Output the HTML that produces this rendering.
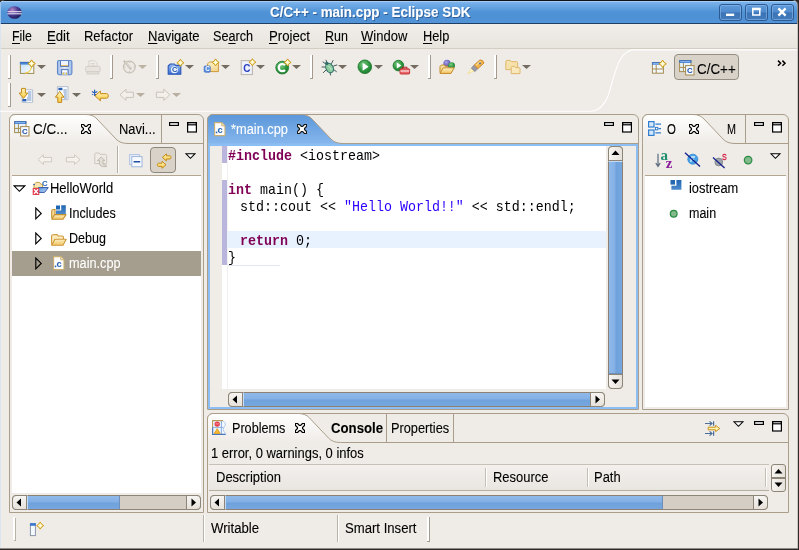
<!DOCTYPE html>
<html><head><meta charset="utf-8">
<style>
*{box-sizing:border-box;margin:0;padding:0}
html,body{width:799px;height:550px;overflow:hidden;background:#EFEBE7;font-family:"Liberation Sans",sans-serif;font-size:14px;color:#000}
#win{position:absolute;left:0;top:0;width:799px;height:550px;background:#EFEBE7;overflow:hidden}
u{text-decoration:none;border-bottom:1px solid currentColor;display:inline-block;line-height:13px;padding-bottom:0px}
</style></head><body>
<div id="win">
<div style="position:absolute;left:0px;top:0px;width:799px;height:550px;background:#2E2B28"></div>
<div style="position:absolute;left:0px;top:0px;width:798px;height:549px;background:#8F8B86;border-radius:5px 5px 0 0"></div>
<div style="position:absolute;left:797px;top:24px;width:1px;height:524px;background:#C9C5BF"></div>
<div style="position:absolute;left:0px;top:0px;width:797px;height:548px;background:#EFEBE7;border-radius:5px 5px 0 0"></div>
<div style="position:absolute;left:0px;top:0px;width:797px;height:24px;border-radius:5px 5px 0 0;background:linear-gradient(#0E141C 0,#0E141C 1px,#A8CCF2 1px,#A8CCF2 2px,#7CB3EB 2px,#4F93D6 12px,#4E91D4 17px,#5294D7 22.8px,#1F3F66 23px,#1F3F66 24px);"></div>
<div style="position:absolute;left:0px;top:24px;width:1px;height:524px;background:#DCE4EE"></div>
<div style="position:absolute;left:0px;top:2px;width:1px;height:22px;background:#9CC2EE"></div>
<div style="position:absolute;left:719px;top:4px;width:23px;height:17px;border:1px solid #2C5A94;border-radius:3px;background:linear-gradient(#5F9ADA 0,#4F8BCE 48%,#3A72B4 52%,#447DBE 100%);box-shadow:inset 0 0 0 1px rgba(150,195,240,.5)"></div>
<div style="position:absolute;left:745px;top:4px;width:23px;height:17px;border:1px solid #2C5A94;border-radius:3px;background:linear-gradient(#5F9ADA 0,#4F8BCE 48%,#3A72B4 52%,#447DBE 100%);box-shadow:inset 0 0 0 1px rgba(150,195,240,.5)"></div>
<div style="position:absolute;left:771px;top:4px;width:23px;height:17px;border:1px solid #2C5A94;border-radius:3px;background:linear-gradient(#5F9ADA 0,#4F8BCE 48%,#3A72B4 52%,#447DBE 100%);box-shadow:inset 0 0 0 1px rgba(150,195,240,.5)"></div>
<div style="position:absolute;left:1px;top:24px;width:796px;height:24px;background:linear-gradient(#F1EEEA,#E8E4DE)"></div>
<div style="position:absolute;left:1px;top:48px;width:796px;height:1px;background:#D3CDC3"></div>
<div style="position:absolute;left:9px;top:114px;width:195px;height:399px;border:1px solid #AA9E8A;border-radius:6px 6px 0 0;background:#EFEBE7;"></div>
<div style="position:absolute;left:12px;top:175px;width:189px;height:1px;background:#B3A792"></div>
<div style="position:absolute;left:12px;top:176px;width:189px;height:317px;background:#fff"></div>
<div style="position:absolute;left:207px;top:114px;width:432px;height:296px;border:1px solid #AA9E8A;border-radius:6px 6px 0 0;background:#EFEBE7;"></div>
<div style="position:absolute;left:208px;top:143px;width:430px;height:266px;background:#8CBEF3"></div>
<div style="position:absolute;left:642px;top:114px;width:147px;height:296px;border:1px solid #AA9E8A;border-radius:6px 6px 0 0;background:#EFEBE7;"></div>
<div style="position:absolute;left:645px;top:175px;width:141px;height:1px;background:#B3A792"></div>
<div style="position:absolute;left:645px;top:176px;width:141px;height:231px;background:#fff"></div>
<div style="position:absolute;left:207px;top:413px;width:582px;height:100px;border:1px solid #AA9E8A;border-radius:6px 6px 0 0;background:#EFEBE7;"></div>
<svg style="position:absolute;left:0;top:0" width="799" height="550" viewBox="0 0 799 550"><defs><linearGradient id="tg1" x1="0" y1="0" x2="0" y2="1"><stop offset="0" stop-color="#FFFFFF"/><stop offset="1" stop-color="#EFEBE7"/></linearGradient></defs><path d="M9.5 143.5 L9.5 120.0 A5.5 5.5 0 0 1 15.0 114.5 L86 114.5 Q93 114.5 97 119.0 L116 139.0 Q120 143.5 128 143.5 Z" fill="url(#tg1)"/><path d="M9.5 143.5 L9.5 120.0 A5.5 5.5 0 0 1 15.0 114.5 L86 114.5 Q93 114.5 97 119.0 L116 139.0 Q120 143.5 128 143.5 L203.5 143.5" fill="none" stroke="#AA9E8A" stroke-width="1"/></svg>
<div style="position:absolute;left:161px;top:115px;width:1px;height:28px;background:#AA9E8A"></div>
<svg style="position:absolute;left:0;top:0" width="799" height="550" viewBox="0 0 799 550"><defs><linearGradient id="tg2" x1="0" y1="0" x2="0" y2="1"><stop offset="0" stop-color="#FFFFFF"/><stop offset="1" stop-color="#EFEBE7"/></linearGradient></defs><path d="M642.5 143.5 L642.5 120.0 A5.5 5.5 0 0 1 648.0 114.5 L693 114.5 Q700 114.5 704 119.0 L723 139.0 Q727 143.5 735 143.5 Z" fill="url(#tg2)"/><path d="M642.5 143.5 L642.5 120.0 A5.5 5.5 0 0 1 648.0 114.5 L693 114.5 Q700 114.5 704 119.0 L723 139.0 Q727 143.5 735 143.5 L788.5 143.5" fill="none" stroke="#AA9E8A" stroke-width="1"/></svg>
<div style="position:absolute;left:745px;top:115px;width:1px;height:28px;background:#AA9E8A"></div>
<svg style="position:absolute;left:0;top:0" width="799" height="550" viewBox="0 0 799 550"><defs><linearGradient id="tg3" x1="0" y1="0" x2="0" y2="1"><stop offset="0" stop-color="#FFFFFF"/><stop offset="1" stop-color="#EFEBE7"/></linearGradient></defs><path d="M207.5 442.5 L207.5 419.0 A5.5 5.5 0 0 1 213.0 413.5 L298.5 413.5 Q305.5 413.5 309.5 418.0 L328.5 438.0 Q332.5 442.5 340.5 442.5 Z" fill="url(#tg3)"/><path d="M207.5 442.5 L207.5 419.0 A5.5 5.5 0 0 1 213.0 413.5 L298.5 413.5 Q305.5 413.5 309.5 418.0 L328.5 438.0 Q332.5 442.5 340.5 442.5 L788.5 442.5" fill="none" stroke="#AA9E8A" stroke-width="1"/></svg>
<div style="position:absolute;left:386px;top:414px;width:1px;height:28px;background:#AA9E8A"></div>
<div style="position:absolute;left:453px;top:414px;width:1px;height:28px;background:#AA9E8A"></div>
<svg style="position:absolute;left:0;top:0" width="799" height="550" viewBox="0 0 799 550"><defs><linearGradient id="tg4" x1="0" y1="0" x2="0" y2="1"><stop offset="0" stop-color="#5B97DA"/><stop offset="1" stop-color="#86B6EC"/></linearGradient></defs><path d="M207.5 143.5 L207.5 120.0 A5.5 5.5 0 0 1 213.0 114.5 L301 114.5 Q308 114.5 312 119.0 L331 139.0 Q335 143.5 343 143.5 Z" fill="url(#tg4)"/><path d="M207.5 143.5 L207.5 120.0 A5.5 5.5 0 0 1 213.0 114.5 L301 114.5 Q308 114.5 312 119.0 L331 139.0 Q335 143.5 343 143.5 L638.5 143.5" fill="none" stroke="#AA9E8A" stroke-width="1"/></svg>
<div style="position:absolute;left:210px;top:146px;width:426px;height:261px;background:#EFEBE7"></div>
<div style="position:absolute;left:210px;top:146px;width:12px;height:243px;background:#F0EDE9"></div>
<div style="position:absolute;left:222px;top:146px;width:384px;height:243px;background:#fff"></div>
<div style="position:absolute;left:227px;top:146px;width:1px;height:243px;background:#F1F1F1"></div>
<div style="position:absolute;left:12px;top:495px;width:189px;height:15px;background:#D5CEC4;border:1px solid #8C8578;border-radius:4px"></div>
<div style="position:absolute;left:26px;top:495px;width:93px;height:15px;background:linear-gradient(#8FB9EA 0,#83B0E5 45%,#6FA1DB 55%,#76A7DF 100%);border-top:1px solid #8C8071;border-bottom:1px solid #8C8071;border-right:1px solid #6E8FB8;border-left:1px solid #C5DCF5;left:27px"></div>
<div style="position:absolute;left:12px;top:495px;width:15px;height:15px;background:linear-gradient(#F7F5F2,#E6E1DA);border:1px solid #8C8578;border-radius:4px 0 0 4px"></div>
<div style="position:absolute;left:186px;top:495px;width:15px;height:15px;background:linear-gradient(#F7F5F2,#E6E1DA);border:1px solid #8C8578;border-radius:0 4px 4px 0"></div>
<div style="position:absolute;left:228px;top:392px;width:377px;height:15px;background:#D5CEC4;border:1px solid #8C8578;border-radius:4px"></div>
<div style="position:absolute;left:242px;top:392px;width:348px;height:15px;background:linear-gradient(#8FB9EA 0,#83B0E5 45%,#6FA1DB 55%,#76A7DF 100%);border-top:1px solid #8C8071;border-bottom:1px solid #8C8071;border-right:1px solid #6E8FB8;border-left:1px solid #C5DCF5;left:243px"></div>
<div style="position:absolute;left:228px;top:392px;width:15px;height:15px;background:linear-gradient(#F7F5F2,#E6E1DA);border:1px solid #8C8578;border-radius:4px 0 0 4px"></div>
<div style="position:absolute;left:590px;top:392px;width:15px;height:15px;background:linear-gradient(#F7F5F2,#E6E1DA);border:1px solid #8C8578;border-radius:0 4px 4px 0"></div>
<div style="position:absolute;left:608px;top:146px;width:15px;height:243px;background:#D5CEC4;border:1px solid #8C8578;border-radius:4px"></div>
<div style="position:absolute;left:608px;top:161px;width:15px;height:213px;background:linear-gradient(90deg,#8FB9EA 0,#83B0E5 45%,#6FA1DB 55%,#76A7DF 100%);border-left:1px solid #8C8071;border-right:1px solid #8C8071;border-bottom:1px solid #6E8FB8;border-top:1px solid #C5DCF5"></div>
<div style="position:absolute;left:608px;top:146px;width:15px;height:15px;background:linear-gradient(90deg,#F7F5F2,#E6E1DA);border:1px solid #8C8578;border-radius:4px 4px 0 0"></div>
<div style="position:absolute;left:608px;top:374px;width:15px;height:15px;background:linear-gradient(90deg,#F7F5F2,#E6E1DA);border:1px solid #8C8578;border-radius:0 0 4px 4px"></div>
<div style="position:absolute;left:210px;top:495px;width:558px;height:15px;background:#D5CEC4;border:1px solid #8C8578;border-radius:4px"></div>
<div style="position:absolute;left:224px;top:495px;width:438px;height:15px;background:linear-gradient(#8FB9EA 0,#83B0E5 45%,#6FA1DB 55%,#76A7DF 100%);border-top:1px solid #8C8071;border-bottom:1px solid #8C8071;border-right:1px solid #6E8FB8;border-left:1px solid #C5DCF5;left:225px"></div>
<div style="position:absolute;left:210px;top:495px;width:15px;height:15px;background:linear-gradient(#F7F5F2,#E6E1DA);border:1px solid #8C8578;border-radius:4px 0 0 4px"></div>
<div style="position:absolute;left:753px;top:495px;width:15px;height:15px;background:linear-gradient(#F7F5F2,#E6E1DA);border:1px solid #8C8578;border-radius:0 4px 4px 0"></div>
<div style="position:absolute;left:12px;top:251px;width:189px;height:25px;background:#A59D8E"></div>
<div style="position:absolute;left:209px;top:464px;width:560px;height:27px;background:linear-gradient(#F3F0ED,#E9E5E0);border-top:1px solid #C8C1B6;border-bottom:1px solid #B5AEA2"></div>
<div style="position:absolute;left:485px;top:468px;width:1px;height:19px;background:#C5BEB3"></div>
<div style="position:absolute;left:486px;top:468px;width:1px;height:19px;background:#fff"></div>
<div style="position:absolute;left:587px;top:468px;width:1px;height:19px;background:#C5BEB3"></div>
<div style="position:absolute;left:588px;top:468px;width:1px;height:19px;background:#fff"></div>
<div style="position:absolute;left:765px;top:468px;width:1px;height:19px;background:#C5BEB3"></div>
<div style="position:absolute;left:766px;top:468px;width:1px;height:19px;background:#fff"></div>
<div style="position:absolute;left:203px;top:515px;width:1px;height:27px;background:#B9B2A6"></div>
<div style="position:absolute;left:204px;top:515px;width:1px;height:27px;background:#fff"></div>
<div style="position:absolute;left:337px;top:515px;width:1px;height:27px;background:#B9B2A6"></div>
<div style="position:absolute;left:338px;top:515px;width:1px;height:27px;background:#fff"></div>
<div style="position:absolute;left:427px;top:517px;width:2px;height:24px;background:#fff"></div>
<div style="position:absolute;left:429px;top:517px;width:1px;height:25px;background:#A39B8F"></div>
<div style="position:absolute;left:427px;top:541px;width:2px;height:1px;background:#A39B8F"></div>
<div style="position:absolute;left:13px;top:517px;width:2px;height:23px;background:#fff;box-shadow:1px 1px 0 #B9B2A6"></div>
<div style="position:absolute;left:674px;top:54px;width:65px;height:26px;background:#D9D2C8;border:1px solid #958F83;border-radius:4px"></div>
<div style="position:absolute;left:227px;top:231px;width:379px;height:17px;background:#E8F2FE"></div>
<div style="position:absolute;left:222px;top:146px;width:5px;height:17px;background:#B9B5DC"></div>
<div style="position:absolute;left:222px;top:180px;width:5px;height:85px;background:#B9B5DC"></div>
<div style="position:absolute;left:228px;top:265px;width:52px;height:1px;background:#DDE6F4"></div>
<svg width="0" height="0" style="position:absolute"><defs><linearGradient id="fy" x1="0" y1="0" x2="0" y2="1"><stop offset="0" stop-color="#FDEFC4"/><stop offset="1" stop-color="#F3C562"/></linearGradient>
<linearGradient id="fb" x1="0" y1="0" x2="1" y2="1"><stop offset="0" stop-color="#4C8EDC"/><stop offset="1" stop-color="#C4DCF6"/></linearGradient>
<linearGradient id="bl" x1="0" y1="0" x2="0" y2="1"><stop offset="0" stop-color="#1F66B2"/><stop offset="1" stop-color="#4E8BCB"/></linearGradient></defs></svg>
<div style="position:absolute;left:8px;top:55px;width:2px;height:23px;background:#fff"></div>
<div style="position:absolute;left:10px;top:55px;width:1px;height:24px;background:#A39B8F"></div>
<div style="position:absolute;left:8px;top:78px;width:2px;height:1px;background:#A39B8F"></div>
<div style="position:absolute;left:8px;top:83px;width:2px;height:23px;background:#fff"></div>
<div style="position:absolute;left:10px;top:83px;width:1px;height:24px;background:#A39B8F"></div>
<div style="position:absolute;left:8px;top:106px;width:2px;height:1px;background:#A39B8F"></div>
<div style="position:absolute;left:110px;top:55px;width:2px;height:23px;background:#fff"></div>
<div style="position:absolute;left:112px;top:55px;width:1px;height:24px;background:#A39B8F"></div>
<div style="position:absolute;left:110px;top:78px;width:2px;height:1px;background:#A39B8F"></div>
<div style="position:absolute;left:156px;top:55px;width:2px;height:23px;background:#fff"></div>
<div style="position:absolute;left:158px;top:55px;width:1px;height:24px;background:#A39B8F"></div>
<div style="position:absolute;left:156px;top:78px;width:2px;height:1px;background:#A39B8F"></div>
<div style="position:absolute;left:310px;top:55px;width:2px;height:23px;background:#fff"></div>
<div style="position:absolute;left:312px;top:55px;width:1px;height:24px;background:#A39B8F"></div>
<div style="position:absolute;left:310px;top:78px;width:2px;height:1px;background:#A39B8F"></div>
<div style="position:absolute;left:428px;top:55px;width:2px;height:23px;background:#fff"></div>
<div style="position:absolute;left:430px;top:55px;width:1px;height:24px;background:#A39B8F"></div>
<div style="position:absolute;left:428px;top:78px;width:2px;height:1px;background:#A39B8F"></div>
<div style="position:absolute;left:494px;top:55px;width:2px;height:23px;background:#fff"></div>
<div style="position:absolute;left:496px;top:55px;width:1px;height:24px;background:#A39B8F"></div>
<div style="position:absolute;left:494px;top:78px;width:2px;height:1px;background:#A39B8F"></div>
<svg width="0" height="0" style="position:absolute"><defs>
<linearGradient id="wbody" x1="0" y1="0" x2="1" y2="1"><stop offset="0" stop-color="#BFDDF7"/><stop offset="1" stop-color="#FFFFFF"/></linearGradient>
<linearGradient id="wtitle" x1="0" y1="0" x2="0" y2="1"><stop offset="0" stop-color="#2E6BBE"/><stop offset="1" stop-color="#5C97DC"/></linearGradient>
<linearGradient id="flop" x1="0" y1="0" x2="0" y2="1"><stop offset="0" stop-color="#6E9EDC"/><stop offset="1" stop-color="#4C7CC4"/></linearGradient>
<linearGradient id="bluebox" x1="0" y1="0" x2="0" y2="1"><stop offset="0" stop-color="#93BAF0"/><stop offset="1" stop-color="#3A6ED0"/></linearGradient>
<radialGradient id="grn" cx="40%" cy="35%" r="70%"><stop offset="0" stop-color="#7FCB86"/><stop offset="0.6" stop-color="#2F9640"/><stop offset="1" stop-color="#1C7A2E"/></radialGradient>
<radialGradient id="pur" cx="40%" cy="35%" r="70%"><stop offset="0" stop-color="#A9A3E6"/><stop offset="1" stop-color="#4B3FA8"/></radialGradient>
<linearGradient id="yarrow" x1="0" y1="0" x2="0" y2="1"><stop offset="0" stop-color="#FFF6C0"/><stop offset="1" stop-color="#F7C940"/></linearGradient>
<linearGradient id="palefold" x1="0" y1="0" x2="0" y2="1"><stop offset="0" stop-color="#FBEFC8"/><stop offset="1" stop-color="#F2D48A"/></linearGradient>
</defs></svg>
<svg width="0" height="0" style="position:absolute"><defs><linearGradient id="flop2" x1="0" y1="0" x2="1" y2="0"><stop offset="0" stop-color="#9DBBE8"/><stop offset="0.5" stop-color="#E8F0FB"/><stop offset="1" stop-color="#9DBBE8"/></linearGradient></defs></svg>
<div style="position:absolute;left:117px;top:146px;width:1px;height:27px;background:#B5AEA2"></div>
<div style="position:absolute;left:118px;top:146px;width:1px;height:27px;background:#fff"></div>
<div style="position:absolute;left:150px;top:147px;width:26px;height:26px;background:#D9D2C8;border:1px solid #8E887C;border-radius:4px"></div>
<div style="position:absolute;left:771px;top:464px;width:15px;height:28px;background:linear-gradient(90deg,#F7F5F2,#E6E1DA);border:1px solid #8C8578;border-radius:3px"></div>
<div style="position:absolute;left:771px;top:477px;width:15px;height:2px;background:#8C8578"></div>
<div style="position:absolute;left:0;top:0;width:799px;height:550px;will-change:transform">
<svg style="position:absolute;left:7px;top:6px;" width="15" height="13" viewBox="0 0 15 13"><defs><radialGradient id="eg" cx="35%" cy="30%" r="75%"><stop offset="0" stop-color="#B58AC8"/><stop offset="0.5" stop-color="#4B3C96"/><stop offset="1" stop-color="#1D1A55"/></radialGradient></defs>
<ellipse cx="7.5" cy="6.5" rx="7.2" ry="6.3" fill="url(#eg)"/>
<rect x="0.6" y="5.2" width="14" height="1" fill="#F4EEF8"/><rect x="0.4" y="7.3" width="14.4" height="1" fill="#F4EEF8"/></svg>
<svg style="position:absolute;left:719px;top:4px;" width="23" height="17" viewBox="0 0 23 17"><rect x="7" y="9.6" width="8.2" height="2.4" fill="#fff"/></svg>
<svg style="position:absolute;left:745px;top:4px;" width="23" height="17" viewBox="0 0 23 17"><rect x="7.8" y="4.6" width="7" height="6.4" fill="none" stroke="#fff" stroke-width="1.5"/><rect x="7" y="3.8" width="8.6" height="2.4" fill="#fff"/></svg>
<svg style="position:absolute;left:771px;top:4px;" width="23" height="17" viewBox="0 0 23 17"><path d="M7.4 4.4 L14.6 11.6 M14.6 4.4 L7.4 11.6" stroke="#fff" stroke-width="2.4" stroke-linecap="butt"/></svg>
<svg style="position:absolute;left:0px;top:46px;" width="799" height="70" viewBox="0 0 799 70"><path d="M0 65.2 L591 65.2 C599 65.2 604.5 58 608 50 C610.5 43 613 32 615.8 24.4 C618 17 621.5 10 626 6.6 C628 5 630 3.8 633.5 3.8 L797 3.8" fill="none" stroke="#fff" stroke-width="1.15"/></svg>
<svg style="position:absolute;left:12px;top:495px;" width="189" height="15" viewBox="0 0 189 15"><path d="M9 3.5 L4.5 7.5 L9 11.5Z" fill="#000"/><path d="M179.5 3.5 L184.0 7.5 L179.5 11.5Z" fill="#000"/></svg>
<svg style="position:absolute;left:228px;top:392px;" width="377" height="15" viewBox="0 0 377 15"><path d="M9 3.5 L4.5 7.5 L9 11.5Z" fill="#000"/><path d="M367.5 3.5 L372.0 7.5 L367.5 11.5Z" fill="#000"/></svg>
<svg style="position:absolute;left:608px;top:146px;" width="15" height="243" viewBox="0 0 15 243"><path d="M3.5 9 L7.5 4.5 L11.5 9Z" fill="#000"/><path d="M3.5 233.5 L7.5 238.0 L11.5 233.5Z" fill="#000"/></svg>
<svg style="position:absolute;left:210px;top:495px;" width="558" height="15" viewBox="0 0 558 15"><path d="M9 3.5 L4.5 7.5 L9 11.5Z" fill="#000"/><path d="M548.5 3.5 L553.0 7.5 L548.5 11.5Z" fill="#000"/></svg>
<svg style="position:absolute;left:13px;top:184.5px;" width="13" height="8" viewBox="0 0 13 8"><path d="M1 0.8 L11.8 0.8 L6.4 6.3 Z" fill="none" stroke="#000" stroke-width="1.15" stroke-linejoin="miter"/></svg>
<svg style="position:absolute;left:35px;top:206.5px;" width="8" height="13" viewBox="0 0 8 13"><path d="M0.8 1 L0.8 11.8 L6.2 6.4 Z" fill="none" stroke="#000" stroke-width="1.15" stroke-linejoin="miter"/></svg>
<svg style="position:absolute;left:35px;top:231.5px;" width="8" height="13" viewBox="0 0 8 13"><path d="M0.8 1 L0.8 11.8 L6.2 6.4 Z" fill="none" stroke="#000" stroke-width="1.15" stroke-linejoin="miter"/></svg>
<svg style="position:absolute;left:35px;top:256.5px;" width="8" height="13" viewBox="0 0 8 13"><path d="M0.8 1 L0.8 11.8 L6.2 6.4 Z" fill="none" stroke="#000" stroke-width="1.15" stroke-linejoin="miter"/></svg>
<svg style="position:absolute;left:50.6px;top:233.6px;" width="16" height="12" viewBox="0 0 16 12"><path d="M0.6 10.5 L0.6 2.2 Q0.6 0.8 2 0.7 L5.5 0.6 Q6.8 0.7 7.2 2 L11.4 2 Q12.4 2.1 12.4 3.2 L12.4 5" fill="#FBECBF" stroke="#CF993B" stroke-width="1.1"/>
<path d="M0.7 11.3 L3.8 5.2 L15.2 5.2 L12 11.3 Z" fill="url(#fy)" stroke="#CF993B" stroke-width="1.1" stroke-linejoin="round"/></svg>
<svg style="position:absolute;left:50.5px;top:205px;" width="16" height="15" viewBox="0 0 16 15"><rect x="5" y="0.5" width="4" height="4" fill="#1F66B2"/>
<path d="M10.2 0.2 L14.8 0.2 L14.8 9 L5 9 L5 5.6 L10.2 5.6 Z" fill="url(#bl)"/>
<path d="M0.7 13 L0.7 6 Q0.8 4.6 2.2 4.5 L4 4.5 L4 9.5" fill="#F9DE9C" stroke="#C4902F" stroke-width="1.1"/>
<path d="M0.7 14.2 L3.6 9.6 L15 9.6 L12 14.2 Z" fill="url(#fy)" stroke="#C4902F" stroke-width="1.1" stroke-linejoin="round"/></svg>
<svg style="position:absolute;left:31.5px;top:181px;" width="17" height="15" viewBox="0 0 17 15"><path d="M2 7 L2 3.4 L4 1.4 L7.6 1.4 L8.8 3.2 L10.5 3.4 L10.5 7Z" fill="#F9E6B0" stroke="#C9A04C" stroke-width="1"/>
<path d="M1.2 3.6 L3 3.6" stroke="#3A5FA8" stroke-width="1"/>
<path d="M6.5 6.6 L16.3 6.6 L12.5 11.4 L5 11.4 Z" fill="url(#fb)" stroke="#3359A8" stroke-width="1" stroke-linejoin="round"/>
<text x="10" y="5.4" font-family="Liberation Sans" font-weight="bold" font-size="7.8" fill="#2568B4">C</text>
<rect x="0.7" y="7" width="6.6" height="7" fill="#E23B4D"/>
<path d="M2 8.3 L6 12.7 M6 8.3 L2 12.7" stroke="#fff" stroke-width="1.3"/></svg>
<svg style="position:absolute;left:53px;top:256px;" width="12" height="15" viewBox="0 0 12 15"><path d="M0.6 0.6 L7.8 0.6 L11 3.8 L11 13.6 L0.6 13.6 Z" fill="#fff" stroke="#C8AE72" stroke-width="1.1" stroke-linejoin="round"/>
<path d="M7.8 0.6 L7.8 3.8 L11 3.8" fill="#F3E2B4" stroke="#C8AE72" stroke-width="0.9"/>
<rect x="1.8" y="9.6" width="1.5" height="1.6" fill="#2060B0"/>
<text x="3.6" y="11.3" font-family="Liberation Sans" font-weight="bold" font-size="9.4" fill="#2060B0">c</text></svg>
<svg style="position:absolute;left:213.5px;top:121.5px;" width="12" height="15" viewBox="0 0 12 15"><path d="M0.6 0.6 L7.8 0.6 L11 3.8 L11 13.6 L0.6 13.6 Z" fill="#fff" stroke="#C8AE72" stroke-width="1.1" stroke-linejoin="round"/>
<path d="M7.8 0.6 L7.8 3.8 L11 3.8" fill="#F3E2B4" stroke="#C8AE72" stroke-width="0.9"/>
<rect x="1.8" y="9.6" width="1.5" height="1.6" fill="#2060B0"/>
<text x="3.6" y="11.3" font-family="Liberation Sans" font-weight="bold" font-size="9.4" fill="#2060B0">c</text></svg>
<svg style="position:absolute;left:81px;top:124px;" width="10" height="10" viewBox="0 0 10 10"><polygon points="0.5,0.5 2.5,0.5 4.5,2.5 5.5,2.5 7.5,0.5 9.5,0.5 9.5,2.5 7.5,4.5 7.5,5.5 9.5,7.5 9.5,9.5 7.5,9.5 5.5,7.5 4.5,7.5 2.5,9.5 0.5,9.5 0.5,7.5 2.5,5.5 2.5,4.5 0.5,2.5" fill="#FCFBFA" stroke="#000" stroke-width="1.1" stroke-linejoin="round"/></svg>
<svg style="position:absolute;left:297px;top:124px;" width="10" height="10" viewBox="0 0 10 10"><polygon points="0.5,0.5 2.5,0.5 4.5,2.5 5.5,2.5 7.5,0.5 9.5,0.5 9.5,2.5 7.5,4.5 7.5,5.5 9.5,7.5 9.5,9.5 7.5,9.5 5.5,7.5 4.5,7.5 2.5,9.5 0.5,9.5 0.5,7.5 2.5,5.5 2.5,4.5 0.5,2.5" fill="#fff" stroke="#1a1a1a" stroke-width="1.1" stroke-linejoin="round"/></svg>
<svg style="position:absolute;left:689px;top:124px;" width="10" height="10" viewBox="0 0 10 10"><polygon points="0.5,0.5 2.5,0.5 4.5,2.5 5.5,2.5 7.5,0.5 9.5,0.5 9.5,2.5 7.5,4.5 7.5,5.5 9.5,7.5 9.5,9.5 7.5,9.5 5.5,7.5 4.5,7.5 2.5,9.5 0.5,9.5 0.5,7.5 2.5,5.5 2.5,4.5 0.5,2.5" fill="#FCFBFA" stroke="#000" stroke-width="1.1" stroke-linejoin="round"/></svg>
<svg style="position:absolute;left:294.5px;top:423px;" width="10" height="10" viewBox="0 0 10 10"><polygon points="0.5,0.5 2.5,0.5 4.5,2.5 5.5,2.5 7.5,0.5 9.5,0.5 9.5,2.5 7.5,4.5 7.5,5.5 9.5,7.5 9.5,9.5 7.5,9.5 5.5,7.5 4.5,7.5 2.5,9.5 0.5,9.5 0.5,7.5 2.5,5.5 2.5,4.5 0.5,2.5" fill="#FCFBFA" stroke="#000" stroke-width="1.1" stroke-linejoin="round"/></svg>
<svg style="position:absolute;left:169px;top:122px;" width="10" height="4" viewBox="0 0 10 4"><rect x="0.6" y="0.6" width="8.8" height="2.8" fill="#fff" stroke="#000" stroke-width="1.2"/></svg>
<svg style="position:absolute;left:187px;top:122px;" width="10" height="11" viewBox="0 0 10 11"><rect x="0.6" y="0.6" width="8.8" height="9.4" fill="#fff" stroke="#000" stroke-width="1.2"/><rect x="0.6" y="0.6" width="8.8" height="2.2" fill="none" stroke="#000" stroke-width="1.2"/></svg>
<svg style="position:absolute;left:604px;top:122px;" width="10" height="4" viewBox="0 0 10 4"><rect x="0.6" y="0.6" width="8.8" height="2.8" fill="#fff" stroke="#000" stroke-width="1.2"/></svg>
<svg style="position:absolute;left:622px;top:122px;" width="10" height="11" viewBox="0 0 10 11"><rect x="0.6" y="0.6" width="8.8" height="9.4" fill="#fff" stroke="#000" stroke-width="1.2"/><rect x="0.6" y="0.6" width="8.8" height="2.2" fill="none" stroke="#000" stroke-width="1.2"/></svg>
<svg style="position:absolute;left:754px;top:122px;" width="10" height="4" viewBox="0 0 10 4"><rect x="0.6" y="0.6" width="8.8" height="2.8" fill="#fff" stroke="#000" stroke-width="1.2"/></svg>
<svg style="position:absolute;left:772px;top:122px;" width="10" height="11" viewBox="0 0 10 11"><rect x="0.6" y="0.6" width="8.8" height="9.4" fill="#fff" stroke="#000" stroke-width="1.2"/><rect x="0.6" y="0.6" width="8.8" height="2.2" fill="none" stroke="#000" stroke-width="1.2"/></svg>
<svg style="position:absolute;left:754px;top:421px;" width="10" height="4" viewBox="0 0 10 4"><rect x="0.6" y="0.6" width="8.8" height="2.8" fill="#fff" stroke="#000" stroke-width="1.2"/></svg>
<svg style="position:absolute;left:772px;top:421px;" width="10" height="11" viewBox="0 0 10 11"><rect x="0.6" y="0.6" width="8.8" height="9.4" fill="#fff" stroke="#000" stroke-width="1.2"/><rect x="0.6" y="0.6" width="8.8" height="2.2" fill="none" stroke="#000" stroke-width="1.2"/></svg>
<svg style="position:absolute;left:36.5px;top:64.5px;" width="10" height="5" viewBox="0 0 10 5"><path d="M0 0 L9 0 L4.5 4 Z" fill="#746C61"/></svg>
<svg style="position:absolute;left:184.5px;top:64.5px;" width="10" height="5" viewBox="0 0 10 5"><path d="M0 0 L9 0 L4.5 4 Z" fill="#746C61"/></svg>
<svg style="position:absolute;left:220.5px;top:64.5px;" width="10" height="5" viewBox="0 0 10 5"><path d="M0 0 L9 0 L4.5 4 Z" fill="#746C61"/></svg>
<svg style="position:absolute;left:256.3px;top:64.5px;" width="10" height="5" viewBox="0 0 10 5"><path d="M0 0 L9 0 L4.5 4 Z" fill="#746C61"/></svg>
<svg style="position:absolute;left:292px;top:64.5px;" width="10" height="5" viewBox="0 0 10 5"><path d="M0 0 L9 0 L4.5 4 Z" fill="#746C61"/></svg>
<svg style="position:absolute;left:338px;top:64.5px;" width="10" height="5" viewBox="0 0 10 5"><path d="M0 0 L9 0 L4.5 4 Z" fill="#746C61"/></svg>
<svg style="position:absolute;left:374px;top:64.5px;" width="10" height="5" viewBox="0 0 10 5"><path d="M0 0 L9 0 L4.5 4 Z" fill="#746C61"/></svg>
<svg style="position:absolute;left:410.2px;top:64.5px;" width="10" height="5" viewBox="0 0 10 5"><path d="M0 0 L9 0 L4.5 4 Z" fill="#746C61"/></svg>
<svg style="position:absolute;left:522.2px;top:64.5px;" width="10" height="5" viewBox="0 0 10 5"><path d="M0 0 L9 0 L4.5 4 Z" fill="#746C61"/></svg>
<svg style="position:absolute;left:138.2px;top:64.5px;" width="10" height="5" viewBox="0 0 10 5"><path d="M0 0 L9 0 L4.5 4 Z" fill="#BDB4A6"/></svg>
<svg style="position:absolute;left:36.5px;top:92.5px;" width="10" height="5" viewBox="0 0 10 5"><path d="M0 0 L9 0 L4.5 4 Z" fill="#746C61"/></svg>
<svg style="position:absolute;left:72.2px;top:92.5px;" width="10" height="5" viewBox="0 0 10 5"><path d="M0 0 L9 0 L4.5 4 Z" fill="#746C61"/></svg>
<svg style="position:absolute;left:136px;top:92.5px;" width="10" height="5" viewBox="0 0 10 5"><path d="M0 0 L9 0 L4.5 4 Z" fill="#B9AFA0"/></svg>
<svg style="position:absolute;left:172.3px;top:92.5px;" width="10" height="5" viewBox="0 0 10 5"><path d="M0 0 L9 0 L4.5 4 Z" fill="#B9AFA0"/></svg>
<svg style="position:absolute;left:19px;top:58px;" width="17" height="17" viewBox="0 0 17 17"><rect x="1.4" y="4.4" width="13.4" height="11" fill="url(#wbody)" stroke="#A08C4C" stroke-width="1"/>
<rect x="0.9" y="3.9" width="9" height="2.8" fill="url(#wtitle)"/>
<path d="M6 15.2 Q12 14.6 12.6 8" fill="none" stroke="#F0CC48" stroke-width="1.2"/><g transform="translate(12.6 5.6) scale(1.0)"><path d="M0 -3.7 L1.5 -1.5 L3.7 0 L1.5 1.5 L0 3.7 L-1.5 1.5 L-3.7 0 L-1.5 -1.5 Z" fill="#FFEE9A" stroke="#C8960F" stroke-width="1" stroke-linejoin="round"/><path d="M0 -2 L0 2 M-2 0 L2 0" stroke="#FFFDF0" stroke-width="1"/></g></svg>
<svg style="position:absolute;left:56px;top:59px;" width="18" height="18" viewBox="0 0 18 18"><rect x="1.5" y="1.5" width="14.4" height="14.2" rx="1.6" fill="url(#flop2)" stroke="#5F86C8" stroke-width="1.1"/>
<path d="M4.5 2 L4.5 7.5 L12.6 7.5 L12.6 2" fill="#EEF3FB" stroke="#5577B8" stroke-width="1"/>
<path d="M5.2 6.6 L12 6.6" stroke="#E8B040" stroke-width="0.9"/>
<path d="M5.4 15.6 L5.4 10.4 L12.2 10.4 L12.2 15.6" fill="#D2E0F4" stroke="#5577B8" stroke-width="1"/>
<rect x="6.6" y="11.6" width="4.4" height="1.4" fill="#fff"/><rect x="6.6" y="13.6" width="1.6" height="2" fill="#E8C040"/><rect x="9.8" y="13.6" width="1.2" height="2" fill="#E8C040"/></svg>
<svg style="position:absolute;left:85px;top:60px;" width="16" height="15" viewBox="0 0 16 15"><path d="M4 6.5 L4 0.8 L9.6 0.8 L12 3.2 L12 6.5" fill="#F3F1ED" stroke="#D6D1C9" stroke-width="1"/>
<path d="M5.6 3.4 L10 3.4 M5.6 5.2 L10.4 5.2" stroke="#D3CEC6" stroke-width="0.9"/>
<rect x="0.7" y="6.4" width="14.4" height="5.6" rx="1.2" fill="#E8E5E0" stroke="#D2CDC5" stroke-width="1"/>
<rect x="2" y="11.6" width="11.8" height="2.4" fill="#E0DCD6" stroke="#D2CDC5" stroke-width="0.8"/></svg>
<svg style="position:absolute;left:122px;top:60px;" width="15" height="14" viewBox="0 0 15 14"><circle cx="7.4" cy="7" r="5.9" fill="#EDE9E4" stroke="#C6C0B6" stroke-width="1.2"/>
<path d="M7.4 1.8 L7.4 3 M7.4 11 L7.4 12.2 M2.2 7 L3.4 7 M11.4 7 L12.6 7" stroke="#C6C0B6" stroke-width="1"/>
<path d="M2.4 1.4 L8.6 8.6" stroke="#C2BCB2" stroke-width="2.2" stroke-linecap="round"/><path d="M3 2 L8.2 8" stroke="#E8E4DE" stroke-width="0.8"/></svg>
<svg style="position:absolute;left:167px;top:58px;" width="18" height="18" viewBox="0 0 18 18"><path d="M1.2 16.2 L1.2 8 L3.4 6 L7.4 6 L8.6 7.4 L13.8 7.4 L13.8 16.2 Z" fill="url(#bluebox)" stroke="#2A56B8" stroke-width="1.1" stroke-linejoin="round"/>
<circle cx="7.4" cy="11.8" r="3.5" fill="#E8F0FC"/>
<text x="4.9" y="14.4" font-family="Liberation Sans" font-weight="bold" font-size="7.4" fill="#2458B0">C</text><g transform="translate(13.4 4.8) scale(0.95)"><path d="M0 -3.7 L1.5 -1.5 L3.7 0 L1.5 1.5 L0 3.7 L-1.5 1.5 L-3.7 0 L-1.5 -1.5 Z" fill="#FFEE9A" stroke="#C8960F" stroke-width="1" stroke-linejoin="round"/><path d="M0 -2 L0 2 M-2 0 L2 0" stroke="#FFFDF0" stroke-width="1"/></g></svg>
<svg style="position:absolute;left:203px;top:58px;" width="18" height="16" viewBox="0 0 18 16"><path d="M4.6 13.6 L4.6 5.8 L6.4 4 L9.6 4 L10.8 5.4 L15.4 5.4 L15.4 13.6 Z" fill="url(#palefold)" stroke="#D09A3C" stroke-width="1" stroke-linejoin="round"/>
<rect x="1.2" y="8" width="6" height="6.2" rx="1" fill="#5B8FE0" stroke="#3F6FC8" stroke-width="0.8"/>
<text x="2.2" y="13.2" font-family="Liberation Sans" font-weight="bold" font-size="6.4" fill="#fff">C</text><g transform="translate(12.6 4.4) scale(0.95)"><path d="M0 -3.7 L1.5 -1.5 L3.7 0 L1.5 1.5 L0 3.7 L-1.5 1.5 L-3.7 0 L-1.5 -1.5 Z" fill="#FFEE9A" stroke="#C8960F" stroke-width="1" stroke-linejoin="round"/><path d="M0 -2 L0 2 M-2 0 L2 0" stroke="#FFFDF0" stroke-width="1"/></g></svg>
<svg style="position:absolute;left:240px;top:57px;" width="18" height="19" viewBox="0 0 18 19"><rect x="1.2" y="3.6" width="11.2" height="14" fill="#EEF0FA" stroke="#B9B4AA" stroke-width="1"/>
<text x="3.2" y="15" font-family="Liberation Sans" font-weight="bold" font-size="10" fill="#2A3FC0">C</text><g transform="translate(12.4 5.2) scale(0.95)"><path d="M0 -3.7 L1.5 -1.5 L3.7 0 L1.5 1.5 L0 3.7 L-1.5 1.5 L-3.7 0 L-1.5 -1.5 Z" fill="#FFEE9A" stroke="#C8960F" stroke-width="1" stroke-linejoin="round"/><path d="M0 -2 L0 2 M-2 0 L2 0" stroke="#FFFDF0" stroke-width="1"/></g></svg>
<svg style="position:absolute;left:275px;top:57px;" width="18" height="18" viewBox="0 0 18 18"><circle cx="7.2" cy="10.6" r="6.4" fill="url(#grn)" stroke="#1F7A30" stroke-width="0.8"/>
<path d="M10 8.2 A3.6 3.6 0 1 0 10 13" fill="none" stroke="#fff" stroke-width="2.2"/><g transform="translate(12.6 5.4) scale(0.95)"><path d="M0 -3.7 L1.5 -1.5 L3.7 0 L1.5 1.5 L0 3.7 L-1.5 1.5 L-3.7 0 L-1.5 -1.5 Z" fill="#FFEE9A" stroke="#C8960F" stroke-width="1" stroke-linejoin="round"/><path d="M0 -2 L0 2 M-2 0 L2 0" stroke="#FFFDF0" stroke-width="1"/></g></svg>
<svg style="position:absolute;left:321px;top:59px;" width="17" height="17" viewBox="0 0 17 17"><g stroke="#2A4A48" stroke-width="0.9" stroke-linecap="round"><path d="M5 5 L2 3 M4.2 8 L1 8 M5 11 L2.4 13.6 M10.5 4.5 L12 1.6 M12.6 7 L15.8 6 M12.4 10.4 L15.4 12.6 M9 13.6 L9.6 16 M6 3.6 L5 1.2"/></g>
<ellipse cx="8.6" cy="9" rx="3.6" ry="5" transform="rotate(-28 8.6 9)" fill="#8ACB9E" stroke="#2A6A66" stroke-width="1"/>
<circle cx="5.8" cy="4.4" r="1.7" fill="#2F6F6A"/>
<path d="M7.4 7.4 Q9.8 8 10.4 11" fill="none" stroke="#CDEBDD" stroke-width="1"/></svg>
<svg style="position:absolute;left:357px;top:59px;" width="16" height="16" viewBox="0 0 16 16"><circle cx="7.8" cy="7.8" r="6.8" fill="url(#grn)" stroke="#1F7A30" stroke-width="0.9"/>
<path d="M5.6 3.8 L11.6 7.8 L5.6 11.8 Z" fill="#fff"/></svg>
<svg style="position:absolute;left:392px;top:59px;" width="19" height="17" viewBox="0 0 19 17"><circle cx="6.4" cy="6.6" r="5.3" fill="url(#grn)" stroke="#1F7A30" stroke-width="0.9"/>
<path d="M4.8 3.6 L9.4 6.6 L4.8 9.6 Z" fill="#fff"/>
<path d="M10.6 9.4 L10.6 8.2 L14.8 8.2 L14.8 9.4" fill="none" stroke="#B4232A" stroke-width="1.1"/>
<rect x="8" y="9.8" width="9.6" height="5.2" rx="0.8" fill="#E9666A" stroke="#C0282E" stroke-width="0.9"/>
<rect x="8.4" y="11.4" width="8.8" height="1.2" fill="#FBE4E4"/></svg>
<svg style="position:absolute;left:439px;top:59px;" width="16" height="16" viewBox="0 0 16 16"><circle cx="8" cy="4.4" r="3.6" fill="url(#pur)"/>
<circle cx="12.6" cy="6.6" r="3.4" fill="url(#grn)"/>
<path d="M1 13.8 L1 7.4 L2.4 6 L5.4 6 L6.4 7.2 L9 7.2" fill="#F8DE9A" stroke="#C48A28" stroke-width="1"/>
<path d="M1 14.4 L4.2 8.8 L15.2 8.8 L12 14.4 Z" fill="url(#fy)" stroke="#C48A28" stroke-width="1" stroke-linejoin="round"/></svg>
<svg style="position:absolute;left:467px;top:59px;" width="18" height="16" viewBox="0 0 18 16"><path d="M0.8 14.6 L5.2 8.8 L8 11.6 Z" fill="#FFF8C8" stroke="#F0D870" stroke-width="0.6"/>
<path d="M4.4 9.2 L7.2 6 L11 9.6 L7.8 12.6 Z" fill="#9A9AA6" stroke="#77778A" stroke-width="0.7"/>
<path d="M7.2 6 L13 0.9 Q16.2 0.8 17 4 L11 9.6 Z" fill="#F3B54A" stroke="#C98524" stroke-width="0.9" stroke-linejoin="round"/>
<path d="M9 6.4 L13.6 2.4" stroke="#FCE2A0" stroke-width="1.1"/><circle cx="13" cy="4.4" r="0.9" fill="#3A5FB0"/></svg>
<svg style="position:absolute;left:505px;top:59px;" width="16" height="16" viewBox="0 0 16 16"><path d="M0.8 10.6 L0.8 2.6 Q0.9 1.4 2 1.4 L5 1.4 Q5.8 1.5 6.2 2.6 L11.6 2.6 Q12.6 2.7 12.6 3.8 L12.6 10.6 Z" fill="#F6E1AB" stroke="#DDB86C" stroke-width="1"/>
<path d="M6.2 14.6 L6.2 8.6 Q6.3 7.4 7.4 7.4 L9.4 7.4 Q10.2 7.5 10.6 8.6 L14 8.6 Q15 8.7 15 9.8 L15 14.6 Z" fill="#F8E8BC" stroke="#DDB86C" stroke-width="1"/></svg>
<svg style="position:absolute;left:18px;top:86px;" width="16" height="18" viewBox="0 0 16 18"><path d="M4.2 3.8 L14.6 3.8 L14.6 16.4 L4.2 16.4 Z" fill="#FCFDFF" stroke="#AEB9CC" stroke-width="0.9"/>
<path d="M10 6 L13.4 6 M10 8 L13.4 8 M10 10 L13.4 10 M9 12 L13.4 12 M9 14 L13.4 14" stroke="#6F90C4" stroke-width="1"/>
<rect x="4.4" y="13" width="4" height="2.4" fill="#2B5FB4"/>
<path d="M3.6 2.4 L7.4 2.4 L7.4 7 L9.8 7 L5.5 12.4 L1.2 7 L3.6 7 Z" fill="url(#yarrow)" stroke="#C48A1A" stroke-width="1" stroke-linejoin="round"/></svg>
<svg style="position:absolute;left:54px;top:85px;" width="16" height="19" viewBox="0 0 16 19"><path d="M3.4 1.6 L14 1.6 L14 14.6 L3.4 14.6 Z" fill="#FCFDFF" stroke="#AEB9CC" stroke-width="0.9"/>
<path d="M9.4 5 L12.8 5 M9.4 7 L12.8 7 M10 9 L12.8 9 M10 11 L12.8 11 M10 13 L12.8 13" stroke="#6F90C4" stroke-width="1"/>
<rect x="4.4" y="2.8" width="4" height="2.4" fill="#2B5FB4"/>
<path d="M3.8 17.4 L7.6 17.4 L7.6 12.2 L10 12.2 L5.7 6.4 L1.4 12.2 L3.8 12.2 Z" fill="url(#yarrow)" stroke="#C48A1A" stroke-width="1" stroke-linejoin="round"/></svg>
<svg style="position:absolute;left:91px;top:88px;" width="19" height="15" viewBox="0 0 19 15"><path d="M3.6 1.8 L3.6 8 M0.9 3.4 L6.3 6.4 M6.3 3.4 L0.9 6.4" stroke="#2B5FB4" stroke-width="1.2"/>
<path d="M4 7.8 L9.4 3 L9.4 5.6 L15.6 5.6 Q17.4 5.8 17.4 7.8 Q17.4 10 15.6 10.2 L9.4 10.2 L9.4 12.8 Z" fill="url(#yarrow)" stroke="#C48A1A" stroke-width="1" stroke-linejoin="round"/></svg>
<svg style="position:absolute;left:119px;top:88px;" width="16" height="14" viewBox="0 0 16 14"><path d="M1 6.8 L7 1.2 L7 4.2 L14.4 4.2 L14.4 9.4 L7 9.4 L7 12.4 Z" fill="#F3F0EC" stroke="#C9C3B9" stroke-width="1" stroke-linejoin="round"/></svg>
<svg style="position:absolute;left:155px;top:88px;" width="16" height="14" viewBox="0 0 16 14"><path d="M14.8 6.8 L8.8 1.2 L8.8 4.2 L1.4 4.2 L1.4 9.4 L8.8 9.4 L8.8 12.4 Z" fill="#F3F0EC" stroke="#C9C3B9" stroke-width="1" stroke-linejoin="round"/></svg>
<svg style="position:absolute;left:184.6px;top:152.6px;" width="11" height="7" viewBox="0 0 11 7"><path d="M1 0.8 L9.9 0.8 L5.45 5.3 Z" fill="#fff" stroke="#000" stroke-width="1.1" stroke-linejoin="miter"/></svg>
<svg style="position:absolute;left:769.6px;top:152.8px;" width="11" height="7" viewBox="0 0 11 7"><path d="M1 0.8 L9.9 0.8 L5.45 5.3 Z" fill="#fff" stroke="#000" stroke-width="1.1" stroke-linejoin="miter"/></svg>
<svg style="position:absolute;left:732.6px;top:420.8px;" width="11" height="7" viewBox="0 0 11 7"><path d="M1 0.8 L9.9 0.8 L5.45 5.3 Z" fill="#fff" stroke="#000" stroke-width="1.1" stroke-linejoin="miter"/></svg>
<svg style="position:absolute;left:14px;top:120.6px;" width="16" height="16" viewBox="0 0 16 16"><rect x="0.6" y="0.6" width="11.4" height="11" fill="#E8F4FD" stroke="#A68B4E" stroke-width="1"/>
<rect x="0.2" y="0.2" width="12.2" height="2.6" fill="#2E6FCC"/><rect x="1.2" y="1.2" width="10" height="0.8" fill="#9CC4F0"/>
<path d="M4.4 3 L4.4 11.4 M0.8 7.4 L7 7.4" stroke="#A68B4E" stroke-width="1"/>
<rect x="6.6" y="5.6" width="8.4" height="9.4" fill="#F4F8FF" stroke="#A68B4E" stroke-width="1"/>
<text x="8.1" y="13.4" font-family="Liberation Sans" font-weight="bold" font-size="7.8" fill="#1F4FA6">C</text></svg>
<svg style="position:absolute;left:678.8px;top:59.8px;" width="16" height="16" viewBox="0 0 16 16"><rect x="0.6" y="0.6" width="11.4" height="11" fill="#E8F4FD" stroke="#A68B4E" stroke-width="1"/>
<rect x="0.2" y="0.2" width="12.2" height="2.6" fill="#2E6FCC"/><rect x="1.2" y="1.2" width="10" height="0.8" fill="#9CC4F0"/>
<path d="M4.4 3 L4.4 11.4 M0.8 7.4 L7 7.4" stroke="#A68B4E" stroke-width="1"/>
<rect x="6.6" y="5.6" width="8.4" height="9.4" fill="#F4F8FF" stroke="#A68B4E" stroke-width="1"/>
<text x="8.1" y="13.4" font-family="Liberation Sans" font-weight="bold" font-size="7.8" fill="#1F4FA6">C</text></svg>
<svg style="position:absolute;left:651px;top:58px;" width="16" height="17" viewBox="0 0 16 17"><rect x="1.4" y="4.6" width="11" height="10.6" fill="#F2F8FE" stroke="#A68B4E" stroke-width="1"/>
<rect x="1" y="4.2" width="11.8" height="2.4" fill="#2E6FCC"/><rect x="1.8" y="5" width="8" height="0.8" fill="#9CC4F0"/>
<path d="M5.2 7 L5.2 15 M1.6 11 L12.2 11" stroke="#A68B4E" stroke-width="1"/><g transform="translate(11.6 5.8) scale(1.0)"><path d="M0 -3.7 L1.5 -1.5 L3.7 0 L1.5 1.5 L0 3.7 L-1.5 1.5 L-3.7 0 L-1.5 -1.5 Z" fill="#FFEE9A" stroke="#C8960F" stroke-width="1" stroke-linejoin="round"/><path d="M0 -2 L0 2 M-2 0 L2 0" stroke="#FFFDF0" stroke-width="1"/></g></svg>
<svg style="position:absolute;left:777px;top:60px;" width="10" height="7" viewBox="0 0 10 7"><path d="M1 0.6 L3.6 3.2 L1 5.8 M5.4 0.6 L8 3.2 L5.4 5.8" fill="none" stroke="#000" stroke-width="1.5"/></svg>
<svg style="position:absolute;left:37px;top:154px;" width="16" height="12" viewBox="0 0 16 12"><path d="M1 5.6 L6.4 0.8 L6.4 3.4 L14.6 3.4 L14.6 7.8 L6.4 7.8 L6.4 10.4 Z" fill="#F5F2EE" stroke="#CFC9BF" stroke-width="1" stroke-linejoin="round"/></svg>
<svg style="position:absolute;left:65px;top:154px;" width="16" height="12" viewBox="0 0 16 12"><path d="M15 5.6 L9.6 0.8 L9.6 3.4 L1.4 3.4 L1.4 7.8 L9.6 7.8 L9.6 10.4 Z" fill="#F5F2EE" stroke="#CFC9BF" stroke-width="1" stroke-linejoin="round"/></svg>
<svg style="position:absolute;left:94px;top:152px;" width="15" height="16" viewBox="0 0 15 16"><path d="M0.8 11.6 L0.8 2.4 Q0.9 1 2 1 L5 1 Q5.8 1.1 6.2 2.4 L11.6 2.4 Q12.6 2.5 12.6 3.8 L12.6 11.6 Z" fill="#EFEBE6" stroke="#CDC7BD" stroke-width="1"/>
<path d="M7.2 5 L11 8.6 L9 8.6 L9 11.4 Q9.2 13.4 12.4 13.2 L12.4 14.6 Q5.4 15 5.4 11.4 L5.4 8.6 L3.4 8.6 Z" fill="#E2DED8" stroke="#BDB7AD" stroke-width="0.9"/></svg>
<svg style="position:absolute;left:129px;top:153.6px;" width="14" height="14" viewBox="0 0 14 14"><rect x="0.6" y="0.6" width="9.8" height="10" fill="#EAF1FB" stroke="#AFC3E0" stroke-width="1"/>
<rect x="2.8" y="2.6" width="10.2" height="10.2" fill="#F7FAFF" stroke="#9EB6DA" stroke-width="1"/>
<rect x="4.6" y="7" width="6.6" height="1.5" fill="#1F4FA0"/></svg>
<svg style="position:absolute;left:156px;top:153px;" width="16" height="16" viewBox="0 0 16 16"><path d="M6.4 4.4 L10.4 0.9 L10.4 2.8 L14 2.8 Q15 3 15 4.4 Q15 5.8 14 6 L10.4 6 L10.4 7.9 Z" fill="url(#yarrow)" stroke="#C48A1A" stroke-width="1" stroke-linejoin="round"/>
<path d="M10 11.8 L6 8.3 L6 10.2 L2.4 10.2 Q1.4 10.4 1.4 11.8 Q1.4 13.2 2.4 13.4 L6 13.4 L6 15.3 Z" fill="url(#yarrow)" stroke="#C48A1A" stroke-width="1" stroke-linejoin="round"/></svg>
<svg style="position:absolute;left:648px;top:121px;" width="14" height="15" viewBox="0 0 14 15"><rect x="0.6" y="0.6" width="5.4" height="5.4" fill="#D5E9FA" stroke="#2F7DD0" stroke-width="1.2"/>
<rect x="0.6" y="9" width="5.4" height="5.4" fill="#D5E9FA" stroke="#2F7DD0" stroke-width="1.2"/>
<path d="M7.4 3.2 L13 3.2 M7.4 11.8 L13 11.8 M10.4 7.6 L13 7.6" stroke="#2F7DD0" stroke-width="1.2"/>
<rect x="7.4" y="6.4" width="2.4" height="2.4" fill="#fff" stroke="#2F7DD0" stroke-width="1"/></svg>
<svg style="position:absolute;left:655px;top:152px;" width="19" height="17" viewBox="0 0 19 17"><path d="M3 1.8 L3 13.4 M0.8 11 L3 14.4 L5.2 11" fill="none" stroke="#5A6B80" stroke-width="1.2"/>
<text x="5.5" y="8" font-family="Liberation Serif" font-weight="bold" font-size="15" fill="#1E8F6E">a</text>
<text x="10.7" y="16" font-family="Liberation Serif" font-weight="bold" font-size="15" fill="#8B1E9A">z</text></svg>
<svg style="position:absolute;left:684px;top:152px;" width="17" height="16" viewBox="0 0 17 16"><circle cx="8.8" cy="7.2" r="5" fill="#4AA3E6" stroke="#2A86D4" stroke-width="0.8"/>
<path d="M7 5 L11 5 M7 5 L7 10 M7 7.4 L10 7.4" stroke="#D8EEFC" stroke-width="1.3" fill="none"/>
<path d="M1 0.8 L16 14.6" stroke="#15228C" stroke-width="1.3"/></svg>
<svg style="position:absolute;left:712px;top:152px;" width="16" height="17" viewBox="0 0 16 17"><circle cx="6.8" cy="10" r="3.9" fill="#9FA3AA" stroke="#7C8088" stroke-width="0.8"/>
<path d="M1 5.4 L12.6 16" stroke="#15228C" stroke-width="1.3"/>
<text transform="translate(9.9 8) scale(0.74 1.04)" x="0" y="0" font-family="Liberation Sans" font-size="9.6" fill="#D0103A" stroke="#D0103A" stroke-width="0.25">S</text></svg>
<svg style="position:absolute;left:742.6px;top:155.20000000000002px;" width="10.2" height="10.2" viewBox="0 0 10.2 10.2"><circle cx="5.1" cy="5.1" r="3.8" fill="#82BA8B" stroke="#2B8C45" stroke-width="1.2"/></svg>
<svg style="position:absolute;left:669.0px;top:208.60000000000002px;" width="9.4" height="9.4" viewBox="0 0 9.4 9.4"><circle cx="4.7" cy="4.7" r="3.4000000000000004" fill="#82BA8B" stroke="#2B8C45" stroke-width="1.2"/></svg>
<svg style="position:absolute;left:669.5px;top:180px;" width="12" height="11" viewBox="0 0 12 11"><rect x="0.5" y="0" width="4.5" height="4.6" fill="#2267B0"/>
<path d="M6.4 0 L11.4 0 L11.4 9.8 L1.4 9.8 L1.4 5.8 L6.4 5.8 Z" fill="url(#bl)"/></svg>
<svg style="position:absolute;left:212px;top:420px;" width="15" height="16" viewBox="0 0 15 16"><path d="M0.6 0.6 L9.6 0.6 L9.6 14.4 L0.6 14.4 Z" fill="#EAF5FE"/>
<path d="M9.6 0.6 L11 0.6 Q13.6 2.6 13.4 5 Q11.4 7.4 11.2 9.6 Q11.8 12.8 13.6 13.4 L13.6 14.4 L9.6 14.4 Z" fill="#FAFCFF" stroke="#A9C4EA" stroke-width="0.9"/>
<path d="M0.6 14.4 L0.6 0.6 L11 0.6" fill="none" stroke="#B89A5A" stroke-width="1.1"/>
<path d="M0.6 7.4 L11.4 7.4 M9.4 1 L9.4 14" stroke="#8FB0E0" stroke-width="1"/>
<path d="M0.6 7.4 L0.6 14.4 L13.6 14.4" fill="none" stroke="#4A78C0" stroke-width="1.1"/>
<circle cx="5.2" cy="4.1" r="2.7" fill="#E8404E"/><rect x="3.6" y="3.4" width="3.2" height="0.9" fill="#F4A0A6"/>
<path d="M5.2 8.6 L8.2 13.4 L2.2 13.4 Z" fill="#F5B830" stroke="#E09A18" stroke-width="0.8" stroke-linejoin="round"/></svg>
<svg style="position:absolute;left:704px;top:420px;" width="18" height="18" viewBox="0 0 18 18"><g stroke="#4A6E9A" stroke-width="1.2" fill="none"><path d="M1 3.5 L8 3.5 M5.6 1.4 L8 3.5 L5.6 5.6 M9.6 1.2 L9.6 5.8"/><path d="M1 13.5 L8 13.5 M5.6 11.4 L8 13.5 L5.6 15.6 M9.6 11.2 L9.6 15.8"/></g>
<path d="M4.2 7.2 L11.6 7.2 L11.6 5.4 L15.8 8.5 L11.6 11.6 L11.6 9.8 L4.2 9.8 Z" fill="#FFF3B0" stroke="#C8901A" stroke-width="1" stroke-linejoin="round"/></svg>
<svg style="position:absolute;left:771px;top:464px;" width="15" height="28" viewBox="0 0 15 28"><path d="M3.5 9.5 L7.5 5.0 L11.5 9.5Z" fill="#000"/><path d="M3.5 18.5 L7.5 23.0 L11.5 18.5Z" fill="#000"/></svg>
<svg style="position:absolute;left:29px;top:521px;" width="16" height="16" viewBox="0 0 16 16"><rect x="1.4" y="2.6" width="5" height="12" fill="#F4FAFF" stroke="#8A94A8" stroke-width="1"/>
<rect x="1" y="2.2" width="5.8" height="2.6" fill="#3C78D0"/><g transform="translate(11.2 4.6) scale(0.95)"><path d="M0 -3.7 L1.5 -1.5 L3.7 0 L1.5 1.5 L0 3.7 L-1.5 1.5 L-3.7 0 L-1.5 -1.5 Z" fill="#FFEE9A" stroke="#C8960F" stroke-width="1" stroke-linejoin="round"/><path d="M0 -2 L0 2 M-2 0 L2 0" stroke="#FFFDF0" stroke-width="1"/></g></svg>
</div>
<div style="position:absolute;left:0;top:0;width:799px;height:550px;will-change:transform;-webkit-text-stroke:0.1px">
<div style="position:absolute;left:270.00px;top:1.55px;height:20px;line-height:20px;white-space:pre;font-family:'Liberation Sans',sans-serif;font-size:14px;color:#fff;font-weight:bold;transform-origin:0 0;transform:scaleX(0.9581);text-shadow:1px 1px 0 rgba(30,60,110,.6);">C/C++ - main.cpp - Eclipse SDK</div>
<div style="position:absolute;left:11.70px;top:25.75px;height:20px;line-height:20px;white-space:pre;font-family:'Liberation Sans',sans-serif;font-size:14px;color:#000;transform-origin:0 0;transform:scaleX(0.8823);"><u>F</u>ile</div>
<div style="position:absolute;left:47.00px;top:25.75px;height:20px;line-height:20px;white-space:pre;font-family:'Liberation Sans',sans-serif;font-size:14px;color:#000;transform-origin:0 0;transform:scaleX(0.9410);"><u>E</u>dit</div>
<div style="position:absolute;left:83.70px;top:25.75px;height:20px;line-height:20px;white-space:pre;font-family:'Liberation Sans',sans-serif;font-size:14px;color:#000;transform-origin:0 0;transform:scaleX(0.9262);">Refac<u>t</u>or</div>
<div style="position:absolute;left:148.20px;top:25.75px;height:20px;line-height:20px;white-space:pre;font-family:'Liberation Sans',sans-serif;font-size:14px;color:#000;transform-origin:0 0;transform:scaleX(0.9320);"><u>N</u>avigate</div>
<div style="position:absolute;left:213.40px;top:25.75px;height:20px;line-height:20px;white-space:pre;font-family:'Liberation Sans',sans-serif;font-size:14px;color:#000;transform-origin:0 0;transform:scaleX(0.9041);">Se<u>a</u>rch</div>
<div style="position:absolute;left:269.00px;top:25.75px;height:20px;line-height:20px;white-space:pre;font-family:'Liberation Sans',sans-serif;font-size:14px;color:#000;transform-origin:0 0;transform:scaleX(0.9411);"><u>P</u>roject</div>
<div style="position:absolute;left:324.50px;top:25.75px;height:20px;line-height:20px;white-space:pre;font-family:'Liberation Sans',sans-serif;font-size:14px;color:#000;transform-origin:0 0;transform:scaleX(0.8919);"><u>R</u>un</div>
<div style="position:absolute;left:361.00px;top:25.75px;height:20px;line-height:20px;white-space:pre;font-family:'Liberation Sans',sans-serif;font-size:14px;color:#000;transform-origin:0 0;transform:scaleX(0.9292);"><u>W</u>indow</div>
<div style="position:absolute;left:422.70px;top:25.75px;height:20px;line-height:20px;white-space:pre;font-family:'Liberation Sans',sans-serif;font-size:14px;color:#000;transform-origin:0 0;transform:scaleX(0.9133);"><u>H</u>elp</div>
<div style="position:absolute;left:33.40px;top:119.35px;height:20px;line-height:20px;white-space:pre;font-family:'Liberation Sans',sans-serif;font-size:14px;color:#000;transform-origin:0 0;transform:scaleX(0.9613);">C/C...</div>
<div style="position:absolute;left:119.00px;top:119.35px;height:20px;line-height:20px;white-space:pre;font-family:'Liberation Sans',sans-serif;font-size:14px;color:#000;transform-origin:0 0;transform:scaleX(0.9225);">Navi...</div>
<div style="position:absolute;left:50.30px;top:178.35px;height:20px;line-height:20px;white-space:pre;font-family:'Liberation Sans',sans-serif;font-size:14px;color:#000;transform-origin:0 0;transform:scaleX(0.9266);">HelloWorld</div>
<div style="position:absolute;left:68.80px;top:203.35px;height:20px;line-height:20px;white-space:pre;font-family:'Liberation Sans',sans-serif;font-size:14px;color:#000;transform-origin:0 0;transform:scaleX(0.8974);">Includes</div>
<div style="position:absolute;left:68.80px;top:228.35px;height:20px;line-height:20px;white-space:pre;font-family:'Liberation Sans',sans-serif;font-size:14px;color:#000;transform-origin:0 0;transform:scaleX(0.8944);">Debug</div>
<div style="position:absolute;left:68.80px;top:253.35px;height:20px;line-height:20px;white-space:pre;font-family:'Liberation Sans',sans-serif;font-size:14px;color:#fff;transform-origin:0 0;transform:scaleX(0.9083);">main.cpp</div>
<div style="position:absolute;left:231.00px;top:119.35px;height:20px;line-height:20px;white-space:pre;font-family:'Liberation Sans',sans-serif;font-size:14px;color:#fff;transform-origin:0 0;transform:scaleX(0.9155);">*main.cpp</div>
<div style="position:absolute;left:666.60px;top:118.75px;height:20px;line-height:20px;white-space:pre;font-family:'Liberation Sans',sans-serif;font-size:14px;color:#000;transform-origin:0 0;transform:scaleX(0.8171);">O</div>
<div style="position:absolute;left:727.30px;top:118.75px;height:20px;line-height:20px;white-space:pre;font-family:'Liberation Sans',sans-serif;font-size:14px;color:#000;transform-origin:0 0;transform:scaleX(0.7717);">M</div>
<div style="position:absolute;left:689.40px;top:177.95px;height:20px;line-height:20px;white-space:pre;font-family:'Liberation Sans',sans-serif;font-size:14px;color:#000;transform-origin:0 0;transform:scaleX(0.9182);">iostream</div>
<div style="position:absolute;left:689.40px;top:202.95px;height:20px;line-height:20px;white-space:pre;font-family:'Liberation Sans',sans-serif;font-size:14px;color:#000;transform-origin:0 0;transform:scaleX(0.8929);">main</div>
<div style="position:absolute;left:231.70px;top:418.35px;height:20px;line-height:20px;white-space:pre;font-family:'Liberation Sans',sans-serif;font-size:14px;color:#000;transform-origin:0 0;transform:scaleX(0.9013);">Problems</div>
<div style="position:absolute;left:330.90px;top:418.35px;height:20px;line-height:20px;white-space:pre;font-family:'Liberation Sans',sans-serif;font-size:14px;color:#000;font-weight:bold;transform-origin:0 0;transform:scaleX(0.9433);">Console</div>
<div style="position:absolute;left:391.30px;top:418.35px;height:20px;line-height:20px;white-space:pre;font-family:'Liberation Sans',sans-serif;font-size:14px;color:#000;transform-origin:0 0;transform:scaleX(0.9121);">Properties</div>
<div style="position:absolute;left:211.20px;top:442.95px;height:20px;line-height:20px;white-space:pre;font-family:'Liberation Sans',sans-serif;font-size:14px;color:#000;transform-origin:0 0;transform:scaleX(0.9262);">1 error, 0 warnings, 0 infos</div>
<div style="position:absolute;left:215.60px;top:467.35px;height:20px;line-height:20px;white-space:pre;font-family:'Liberation Sans',sans-serif;font-size:14px;color:#000;transform-origin:0 0;transform:scaleX(0.9282);">Description</div>
<div style="position:absolute;left:492.50px;top:467.35px;height:20px;line-height:20px;white-space:pre;font-family:'Liberation Sans',sans-serif;font-size:14px;color:#000;transform-origin:0 0;transform:scaleX(0.9262);">Resource</div>
<div style="position:absolute;left:594.40px;top:467.35px;height:20px;line-height:20px;white-space:pre;font-family:'Liberation Sans',sans-serif;font-size:14px;color:#000;transform-origin:0 0;transform:scaleX(0.9237);">Path</div>
<div style="position:absolute;left:211.00px;top:518.35px;height:20px;line-height:20px;white-space:pre;font-family:'Liberation Sans',sans-serif;font-size:14px;color:#000;transform-origin:0 0;transform:scaleX(0.9396);">Writable</div>
<div style="position:absolute;left:344.80px;top:518.35px;height:20px;line-height:20px;white-space:pre;font-family:'Liberation Sans',sans-serif;font-size:14px;color:#000;transform-origin:0 0;transform:scaleX(0.9378);">Smart Insert</div>
<div style="position:absolute;left:696.80px;top:58.75px;height:20px;line-height:20px;white-space:pre;font-family:'Liberation Sans',sans-serif;font-size:14px;color:#000;transform-origin:0 0;transform:scaleX(0.9565);">C/C++</div>
<div style="position:absolute;left:228px;top:147.6px;height:17px;line-height:17px;white-space:pre;font-family:'Liberation Mono',monospace;font-size:14.4px;color:#000;-webkit-text-stroke:0;transform-origin:0 0;transform:scaleX(0.9258)"><span style="color:#7F0055;font-weight:bold">#include</span> &lt;iostream&gt;</div>
<div style="position:absolute;left:228px;top:181.6px;height:17px;line-height:17px;white-space:pre;font-family:'Liberation Mono',monospace;font-size:14.4px;color:#000;-webkit-text-stroke:0;transform-origin:0 0;transform:scaleX(0.9258)"><span style="color:#7F0055;font-weight:bold">int</span> main() {</div>
<div style="position:absolute;left:240px;top:198.6px;height:17px;line-height:17px;white-space:pre;font-family:'Liberation Mono',monospace;font-size:14.4px;color:#000;-webkit-text-stroke:0;transform-origin:0 0;transform:scaleX(0.9258)">std::cout &lt;&lt; <span style="color:#2A00FF">"Hello World!!"</span> &lt;&lt; std::endl;</div>
<div style="position:absolute;left:240px;top:232.6px;height:17px;line-height:17px;white-space:pre;font-family:'Liberation Mono',monospace;font-size:14.4px;color:#000;-webkit-text-stroke:0;transform-origin:0 0;transform:scaleX(0.9258)"><span style="color:#7F0055;font-weight:bold">return</span> 0;</div>
<div style="position:absolute;left:228px;top:249.6px;height:17px;line-height:17px;white-space:pre;font-family:'Liberation Mono',monospace;font-size:14.4px;color:#000;-webkit-text-stroke:0;transform-origin:0 0;transform:scaleX(0.9258)">}</div>
</div>
</div>
</body></html>
